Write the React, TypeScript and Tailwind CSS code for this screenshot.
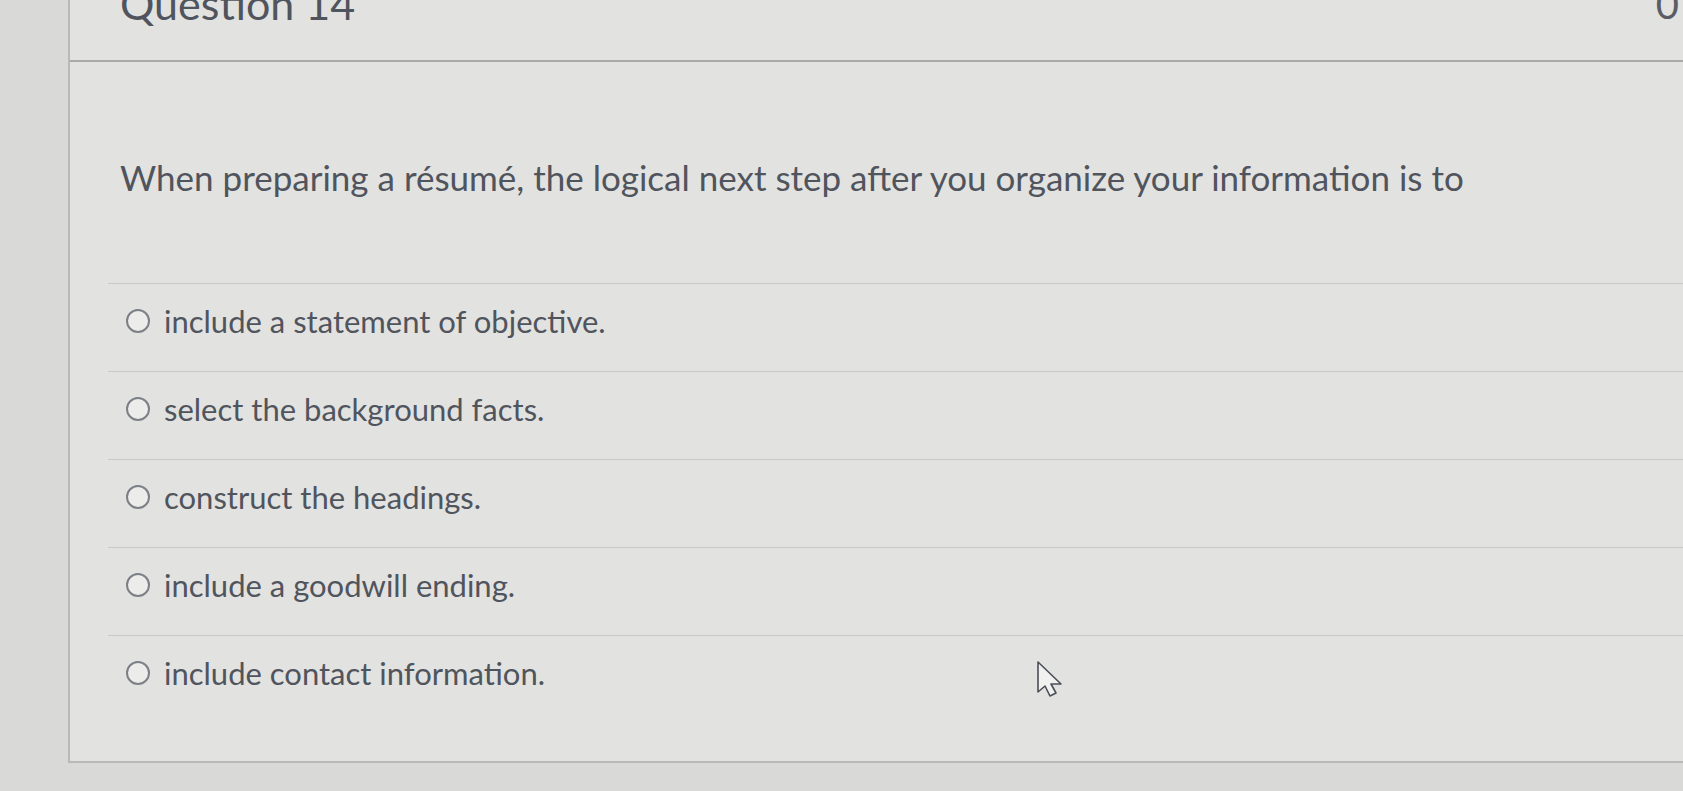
const OPTIONS = [
  "include a statement of objective.",
  "select the background facts.",
  "construct the headings.",
  "include a goodwill ending.",
  "include contact information.",
];

function Cursor() {
  return (
    <svg
      className="absolute left-[1036px] top-[660px]"
      width="30"
      height="40"
      viewBox="0 0 30 40"
    >
      <path
        d="M2 2 L2 32 L9 26 L14 36 L20 33 L15 24 L25 24 Z"
        fill="#f1f1ef"
        stroke="#4b4f58"
        strokeWidth="1.6"
        strokeLinejoin="round"
      />
    </svg>
  );
}

export default function App() {
  return (
    <div className="relative flex h-[791px] w-full overflow-hidden bg-[#d9d9d7] font-['Lato','Open_Sans',sans-serif] text-[#50545d]">
      {/* left gutter */}
      <div className="w-[68px] shrink-0" />

      <div className="flex h-[763px] flex-1 flex-col border-b-2 border-l-2 border-[#b9bab8] bg-[#e2e2e0]">
        {/* header */}
        <div className="flex h-[62px] shrink-0 items-start justify-between border-b-2 border-[#a9aaa8] pl-[50px] pr-[4px]">
          <div className="-mt-[22px] text-[43px] leading-[52px]">Question 14</div>
          <div className="-mt-[22px] text-[40px] leading-[52px] text-[#5a5d64]">0</div>
        </div>

        {/* question body */}
        <div className="pl-[50px] pt-[94px] text-[35px] leading-[42px]">
          When preparing a résumé, the logical next step after you organize your information is to
        </div>

        <div className="ml-[38px] mt-[85px] flex flex-col">
          {OPTIONS.map((o) => (
            <div
              key={o}
              className="flex h-[88px] items-start gap-[14px] border-t border-[#c8c9c7] pl-[18px] pt-[18px] text-[31px] leading-[38px]"
            >
              <span className="mt-[7px] h-[24px] w-[24px] shrink-0 rounded-full border-2 border-[#7c7f86] bg-[#ececea]" />
              <span>{o}</span>
            </div>
          ))}
        </div>
      </div>

      <Cursor />
    </div>
  );
}
